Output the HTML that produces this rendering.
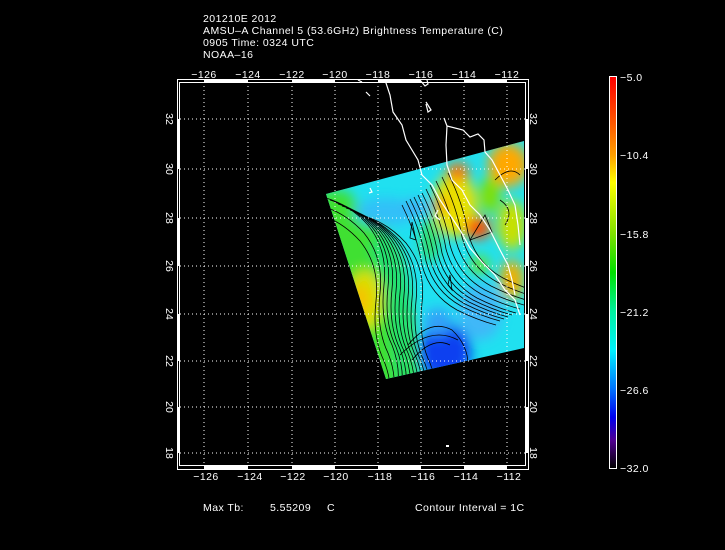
<!DOCTYPE html>
<html><head><meta charset="utf-8"><style>
html,body{margin:0;padding:0;background:#000;width:725px;height:550px;overflow:hidden}
svg{display:block}
text{font-family:"Liberation Sans",sans-serif;fill:#fff;font-size:10.5px}
.t{letter-spacing:0.45px}
</style></head><body>
<svg width="725" height="550" viewBox="0 0 725 550">
<defs>
<clipPath id="sw"><polygon points="326,194 524,141 524,348 386,379"/></clipPath>
<filter id="bl" x="-50%" y="-50%" width="200%" height="200%"><feGaussianBlur stdDeviation="6"/></filter>
<linearGradient id="cb" x1="0" y1="0" x2="0" y2="1">
<stop offset="0" stop-color="#ff0000"/><stop offset="0.12" stop-color="#ff5a00"/><stop offset="0.2" stop-color="#ffa000"/><stop offset="0.27" stop-color="#ffff00"/><stop offset="0.4" stop-color="#80e000"/><stop offset="0.5" stop-color="#00e000"/><stop offset="0.6" stop-color="#00f0a0"/><stop offset="0.7" stop-color="#00f0ff"/><stop offset="0.8" stop-color="#0070ff"/><stop offset="0.87" stop-color="#0000f0"/><stop offset="0.93" stop-color="#500090"/><stop offset="1" stop-color="#000000"/>
</linearGradient>
<path id="cl" d="M326 198 Q350 205 368 225 Q388 250 384 285 Q380 320 392 345 Q400 365 398 385" fill="none" stroke="#000" stroke-width="0.8"/>
<path id="cr" d="M430 185 Q445 215 450 245 Q458 275 485 290 Q505 300 524 305" fill="none" stroke="#000" stroke-width="0.8"/>
</defs>
<g class="t">
<text x="203" y="22">201210E 2012</text>
<text x="203" y="34">AMSU–A Channel 5 (53.6GHz) Brightness Temperature (C)</text>
<text x="203" y="46">0905 Time: 0324 UTC</text>
<text x="203" y="58">NOAA–16</text>
</g>

<g clip-path="url(#sw)">
<rect x="320" y="135" width="210" height="250" fill="#20e0f0"/>
<g filter="url(#bl)">
<path d="M320 190 L345 190 Q380 220 400 250 Q412 290 415 330 L420 390 L320 390 Z" fill="#40e030"/>
<path d="M380 230 Q405 260 410 300 L410 380 L395 380 Q392 300 370 250 Z" fill="#20e070"/>
<ellipse cx="365" cy="300" rx="18" ry="30" fill="#d8e000"/>
<ellipse cx="360" cy="300" rx="9" ry="16" fill="#f8c000"/>
<ellipse cx="385" cy="212" rx="30" ry="14" fill="#30c0f8"/>
<ellipse cx="415" cy="208" rx="12" ry="9" fill="#40b0f8"/>
<ellipse cx="445" cy="352" rx="26" ry="28" fill="#1040f0"/>
<ellipse cx="438" cy="322" rx="14" ry="14" fill="#30a0f8"/>
<ellipse cx="480" cy="312" rx="22" ry="28" fill="#40b8f8"/>
<ellipse cx="455" cy="205" rx="22" ry="32" fill="#e8e000"/>
<ellipse cx="478" cy="228" rx="13" ry="11" fill="#ff5000"/>
<ellipse cx="458" cy="172" rx="11" ry="9" fill="#ff7000"/>
<ellipse cx="440" cy="205" rx="7" ry="7" fill="#ff8000"/>
<ellipse cx="508" cy="165" rx="20" ry="22" fill="#ffa800"/>
<ellipse cx="512" cy="225" rx="14" ry="25" fill="#c8e000"/>
<ellipse cx="490" cy="195" rx="10" ry="18" fill="#80e000"/>
<ellipse cx="512" cy="280" rx="12" ry="20" fill="#f0b000"/>
<ellipse cx="430" cy="240" rx="10" ry="22" fill="#30e070"/>
<ellipse cx="480" cy="265" rx="10" ry="10" fill="#60e040"/>
</g>
<use href="#cl" transform="translate(0,0)"/><use href="#cl" transform="translate(4,2)"/><use href="#cl" transform="translate(8,4)"/><use href="#cl" transform="translate(12,6)"/><use href="#cl" transform="translate(16,8)"/><use href="#cl" transform="translate(20,10)"/><use href="#cl" transform="translate(24,12)"/><use href="#cl" transform="translate(28,14)"/><use href="#cl" transform="translate(32,16)"/><use href="#cl" transform="translate(38,18)"/><use href="#cl" transform="translate(-4,8)"/><use href="#cl" transform="translate(-8,16)"/>
<use href="#cr"/><use href="#cr" transform="translate(-4,4)"/><use href="#cr" transform="translate(-8,8)"/><use href="#cr" transform="translate(-12,10)"/><use href="#cr" transform="translate(-16,12)"/><use href="#cr" transform="translate(-20,14)"/><use href="#cr" transform="translate(-24,16)"/><use href="#cr" transform="translate(-28,20)"/><use href="#cr" transform="translate(6,-4)"/><use href="#cr" transform="translate(12,-8)"/><use href="#cr" transform="translate(18,-12)"/>
<g fill="none" stroke="#000" stroke-width="0.8">
<path d="M470 240 L485 215 L492 232 Z"/>
<path d="M408 345 Q430 318 452 330 Q468 345 468 365"/>
<path d="M400 355 Q430 325 458 340"/>
<path d="M412 360 Q432 336 450 345"/>
<path d="M495 180 Q510 165 520 175"/>
<path d="M500 200 Q515 210 505 225"/>
<path d="M412 222 L416 240 L410 238 Z"/>
<path d="M450 275 L452 290 L448 285 Z"/>
</g>
</g>

<g fill="none" stroke="#fff" stroke-width="1.2">
<path d="M385 80 L390 95 L393 112 L402 125 L406 140 L412 150 L418 160 L422 175 L432 185 L440 200 L450 215 L460 230 L470 248 L482 262 L495 275 L505 290 L515 300 L520 315"/>
<path d="M444 118 L447 126 L446 145 L447 165 L452 180 L462 190 L470 205 L480 215 L490 230 L500 250 L508 265 L512 280 L515 295"/>
<path d="M447 126 L463 130 L470 137 L478 134 L484 140 L485 152 L492 160 L500 175 L508 190 L515 205 L518 225 L520 245"/>
<path d="M420 80 L425 86 L428 84 L427 80"/>
<path d="M426 102 L431 110 L428 112 L426 104"/>
<path d="M366 92 L370 96"/><path d="M358 80 L362 82"/>
<path d="M370 188 L372 192 L369 193"/>
<path d="M438 210 L435 216 L440 220"/>
</g>

<g stroke="#fff" stroke-width="1" stroke-dasharray="1,3">
<path d="M204 82V465M248 82V465M292 82V465M335 82V465M378 82V465M421 82V465M464 82V465M507 82V465"/>
<path d="M180 119H525M180 169H525M180 218H525M180 266H525M180 314H525M180 361H525M180 407H525M180 453H525"/>
</g>

<g fill="none" stroke="#fff" stroke-width="1">
<rect x="177.5" y="79.5" width="351" height="390"/>
<rect x="179.5" y="82.5" width="346" height="383"/>
</g>
<g fill="#fff">
<rect x="204" y="79" width="44" height="3"/><rect x="292" y="79" width="43" height="3"/><rect x="378" y="79" width="43" height="3"/><rect x="464" y="79" width="43" height="3"/>
<rect x="204" y="466" width="44" height="3"/><rect x="292" y="466" width="43" height="3"/><rect x="378" y="466" width="43" height="3"/><rect x="464" y="466" width="43" height="3"/>
<rect x="177" y="119" width="3" height="50"/><rect x="177" y="218" width="3" height="48"/><rect x="177" y="314" width="3" height="47"/><rect x="177" y="407" width="3" height="46"/>
<rect x="525" y="119" width="3" height="50"/><rect x="525" y="218" width="3" height="48"/><rect x="525" y="314" width="3" height="47"/><rect x="525" y="407" width="3" height="46"/>
<rect x="446" y="445" width="3" height="2"/>
</g>

<g text-anchor="middle" class="t">
<text x="204" y="78">−126</text><text x="248" y="78">−124</text><text x="292" y="78">−122</text><text x="335" y="78">−120</text><text x="378" y="78">−118</text><text x="421" y="78">−116</text><text x="464" y="78">−114</text><text x="507" y="78">−112</text>
<text x="206" y="480">−126</text><text x="250" y="480">−124</text><text x="293" y="480">−122</text><text x="336" y="480">−120</text><text x="380" y="480">−118</text><text x="423" y="480">−116</text><text x="466" y="480">−114</text><text x="509" y="480">−112</text>
</g>
<g text-anchor="middle">
<text transform="translate(166,119) rotate(90)">32</text>
<text transform="translate(166,169) rotate(90)">30</text>
<text transform="translate(166,218) rotate(90)">28</text>
<text transform="translate(166,266) rotate(90)">26</text>
<text transform="translate(166,314) rotate(90)">24</text>
<text transform="translate(166,361) rotate(90)">22</text>
<text transform="translate(166,407) rotate(90)">20</text>
<text transform="translate(166,453) rotate(90)">18</text>
<text transform="translate(530,119) rotate(90)">32</text>
<text transform="translate(530,169) rotate(90)">30</text>
<text transform="translate(530,218) rotate(90)">28</text>
<text transform="translate(530,266) rotate(90)">26</text>
<text transform="translate(530,314) rotate(90)">24</text>
<text transform="translate(530,361) rotate(90)">22</text>
<text transform="translate(530,407) rotate(90)">20</text>
<text transform="translate(530,453) rotate(90)">18</text>
</g>

<rect x="609" y="77" width="7" height="391" fill="url(#cb)"/>
<rect x="609.5" y="76.5" width="7" height="392" fill="none" stroke="#fff" stroke-width="1"/>
<g class="t">
<text x="620" y="81">−5.0</text><text x="620" y="159">−10.4</text><text x="620" y="238">−15.8</text><text x="620" y="316">−21.2</text><text x="620" y="394">−26.6</text><text x="620" y="472">−32.0</text>
</g>
<g class="t">
<text x="203" y="511">Max Tb:</text>
<text x="270" y="511">5.55209</text>
<text x="327" y="511">C</text>
<text x="415" y="511">Contour Interval = 1C</text>
</g>
</svg>
</body></html>
